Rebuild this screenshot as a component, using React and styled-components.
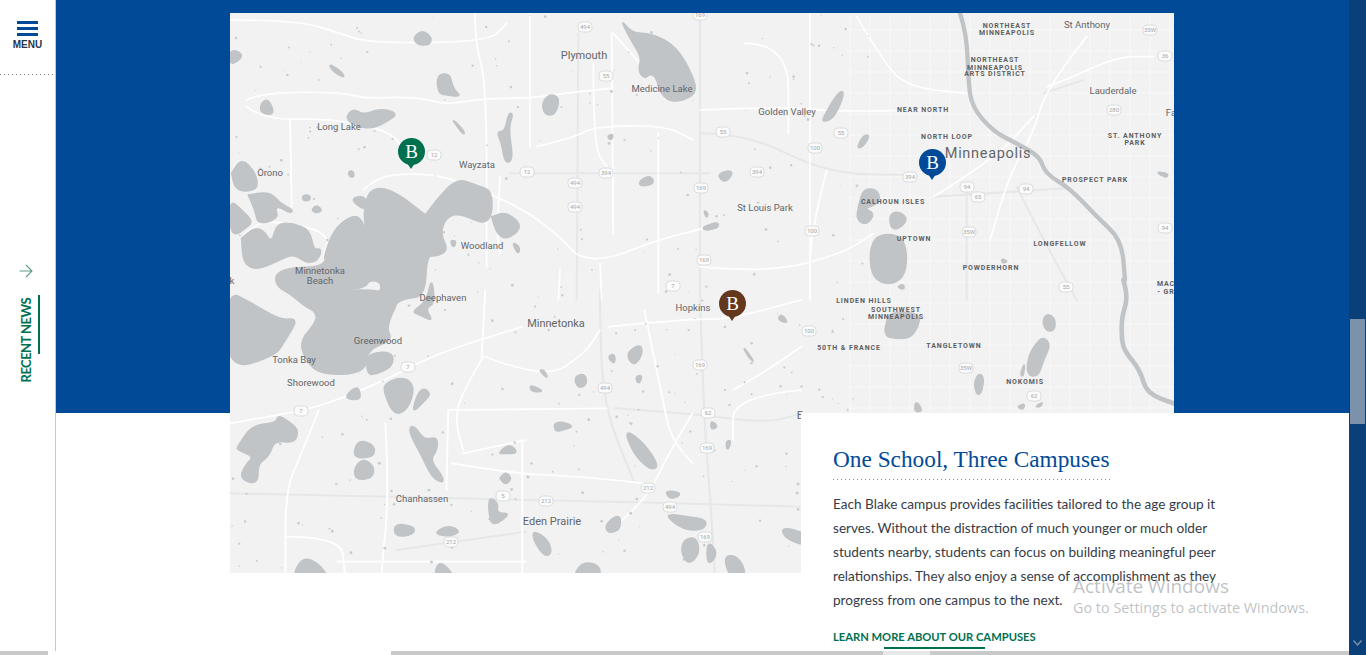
import React from "react";
import styled, { createGlobalStyle } from "styled-components";

const BLUE = "#014a97";
const GREEN = "#00704f";
const LAKE = "#c0c4c7";

const GlobalStyle = createGlobalStyle`
  html, body {
    margin: 0;
    height: 100%;
    overflow: hidden;
    background: #fff;
  }
`;

// lake outlines, traced per crop so each group has its own scale
const lakesNorthWest = [
  "M412,580 Q450,560 510,585 L585,645 L590,640 L620,600 L680,535 L740,555 L790,575 L780,680 L690,640 L650,650 L630,700 L655,750 L620,770 L590,765 L585,890 L520,895 L480,925 L470,990 L260,990 L260,935 L225,920 L180,880 L140,860 L135,820 L190,802 L265,802 L290,780 L280,775 L310,690 L360,650 L390,650 L415,705 L400,650Z",
  "M35,715 Q70,685 100,690 L125,730 Q140,670 190,670 Q240,690 250,750 L275,745 L265,780 Q230,790 190,760 L140,785 L80,810 Q40,790 35,715Z",
  "M55,585 L120,575 L150,610 L190,630 L180,640 L150,620 L135,625 L145,655 L85,675 Q75,630 55,585Z",
  "M0,600 L30,625 L70,665 L45,685 L20,705 L0,690Z",
  "M365,595 L400,588 L410,605 L405,628 L380,615Z",
  "M243,630 Q260,615 277,630 L262,640Z",
  "M218,585 L240,585 L240,602 L218,602Z",
  "M785,650 L830,635 L880,680 L830,720 Q800,700 785,650Z",
  "M545,935 L590,905 L605,830 L615,910 L585,925 L610,965 L570,945Z",
  "M1170,55 L1205,100 L1265,100 Q1340,140 1390,230 Q1400,280 1350,305 Q1310,300 1285,265 L1265,225 L1240,235 L1225,210 L1235,170 L1205,125Z",
  "M548,115 Q575,90 605,110 L600,135 L565,135Z",
  "M620,225 L660,220 L668,265 L695,290 L650,285 L625,280Z",
  "M935,310 Q960,280 990,295 L975,345 L945,345Z",
  "M345,355 Q370,325 400,345 L450,325 L505,340 L470,365 L430,385 L380,380Z",
  "M92,310 L115,295 L135,345 L92,340Z",
  "M5,520 Q35,475 75,515 Q85,565 45,575 Q15,565 5,520Z",
  "M800,395 L825,395 L835,340 L850,340 L835,385 L850,480 L825,490 L815,430Z",
  "M660,350 L705,395 L700,405Z",
  "M295,190 L335,215 L345,235 L310,215Z",
  "M0,145 L45,165 L0,200Z",
  "M1225,545 L1260,525 L1275,550 L1235,560Z",
  "M1130,410 L1150,400 L1145,422Z",
  "M355,515 L370,512 L372,532 L358,530Z",
  "M845,725 L870,740 L865,765Z",
  "M660,720 L680,725 L670,745Z",
  "M1420,630 L1435,640 L1430,655Z",
  "M1420,680 L1440,680 L1440,690 L1425,690Z",
];

const lakesNorthEast = [
  "M365,360 L415,275 L435,275 L405,350 L375,365Z",
  "M470,445 L490,405 L510,405 L490,440Z",
  "M50,525 L85,510 L100,520 L75,550Z",
  "M490,565 L535,570 L540,610 L490,625 L525,640 L500,675 L470,660 L475,620Z",
  "M570,640 L600,635 L625,660 L590,690 L570,680Z",
  "M565,700 L610,715 L622,775 L610,835 L565,855 L520,835 L508,775 L520,715Z",
  "M10,680 L55,665 L55,685 L10,690Z",
  "M1365,515 L1405,520 L1400,535Z",
  "M905,775 L925,785 L905,790Z",
  "M590,860 L612,852 L612,870Z",
];

const lakesSouthWest = [
  "M-10,0 L60,40 L135,90 L185,85 L150,150 L120,200 L-10,240Z",
  "M190,150 L240,90 L240,0 L470,0 L420,110 L440,150 L370,180 L365,250 L240,255 L200,200Z",
  "M370,190 L440,185 L440,230 L390,255 L370,250Z",
  "M415,280 L470,260 L500,290 L480,360 L445,375 L420,320Z",
  "M490,370 L515,290 L545,310 L520,340Z",
  "M310,320 L345,285 L355,325 L330,330Z",
  "M20,470 L60,405 L125,400 L130,375 L160,395 L185,420 L175,460 L120,450 L105,500 L75,520 L75,585 L25,565 L45,520 L65,500 L20,480Z",
  "M335,480 Q350,450 390,465 L390,500 L340,505Z",
  "M335,535 Q360,505 390,530 L385,565 L340,570Z",
  "M485,410 L500,410 L525,450 L560,440 L560,480 L540,510 L575,560 L575,580 L545,560 L520,500 L490,440Z",
  "M730,565 Q745,545 762,565 Q745,585 730,565Z",
  "M700,620 L725,640 L720,670 L760,670 L710,710 L700,670Z",
  "M445,700 L500,710 L495,735 L445,740Z",
  "M550,730 L590,705 L625,725 L590,740Z",
  "M165,870 L195,800 L240,820 L270,870Z",
  "M550,870 L565,805 L615,870Z",
  "M925,870 L950,815 L1000,825 L1000,870Z",
  "M820,720 L860,750 L870,790 L850,800 L820,750Z",
  "M1015,700 L1055,670 L1055,720 L1020,730Z",
  "M1065,415 L1120,460 L1160,530 L1135,540 L1090,490Z",
  "M1070,190 L1110,160 L1115,195 L1090,230Z",
  "M930,260 L960,250 L965,285 L940,295Z",
  "M810,285 L835,295 L845,305 L815,305Z",
  "M875,400 L900,395 L930,410 L900,420 L880,425Z",
  "M725,490 L755,460 L780,490 L740,490Z",
  "M1175,600 L1225,610 L1190,630Z",
  "M1170,670 L1240,680 L1290,690 L1280,720 L1225,720Z",
  "M1225,750 L1260,740 L1270,790 L1240,825 L1220,790Z",
  "M1290,750 L1320,790 L1290,830Z",
  "M1335,800 L1365,795 L1390,830 L1390,870 L1350,860Z",
  "M1490,710 L1560,730 L1560,770 L1500,745Z",
  "M1020,200 L1040,190 L1040,225Z",
  "M1095,260 L1115,255 L1105,285Z",
  "M1300,390 L1320,410 L1300,420Z",
  "M1385,165 L1420,220 L1400,200Z",
  "M1490,70 L1510,100 L1480,90Z",
  "M835,240 L850,240 L860,268Z",
  "M1340,455 L1355,450 L1345,485Z",
];

const lakesSouthEast = [
  "M285,150 Q295,100 345,95 Q390,105 385,140 Q360,175 315,175 Q290,170 285,150Z",
  "M757,125 Q770,100 795,115 Q795,150 770,155Z",
  "M738,190 Q760,170 782,195 Q760,240 745,290 L710,285 L715,230Z",
  "M690,285 L705,245 L700,290Z",
  "M552,310 Q565,280 582,290 L575,340 L560,345Z",
  "M372,395 L378,360 L400,395Z",
  "M680,380 L705,370 L700,390Z",
  "M735,380 L760,365 L750,382Z",
];

const islands = [
  "M280,890 L325,890 L345,935 L300,930Z",
  "M330,880 L410,865 L420,845 L450,850 L445,880 L390,890 L395,935 L370,925 L360,915 L330,925Z",
  "M1245,235 L1270,225 L1285,270 L1260,290Z",
];

const roadsNorthWest = [
  "M50,300 Q80,285 200,275 L350,280 L400,295 L560,290 L650,315 L760,295 L900,295 L1000,280 L1140,265",
  "M50,320 L100,360 L300,355 L470,390 L520,440 L545,510",
  "M400,570 Q440,530 545,520 L650,530 L800,590 L900,640 L1000,720 L1040,770 L1130,780 L1280,720 L1440,680",
  "M735,40 L735,130 L770,250 L770,800",
  "M900,40 L900,440",
  "M1285,400 L1285,880",
  "M1145,100 L1150,700",
  "M0,60 L200,60 L330,100 L420,130 L780,125 L830,70",
  "M810,530 L800,700 L810,760",
  "M1090,190 L1090,440 L1130,500",
  "M920,440 L1040,410 L1090,380 L1300,375 L1390,420",
  "M1110,790 L1115,900",
  "M990,810 L985,900",
  "M40,710 L70,670 L160,665 L300,700 L280,770",
  "M1150,100 L1230,190",
  "M180,355 L185,620",
];

const roadsNorthEast = [
  "M330,40 L330,900",
  "M0,330 L260,320 L400,335 L700,330",
  "M135,130 L265,130 L265,400",
  "M470,50 L530,150 L610,260 L800,280",
  "M380,510 L330,700 L330,900",
  "M0,800 L200,820 L430,760 L520,700",
  "M1040,260 L1100,240 L1250,170 L1360,170",
  "M1160,110 L1040,260 L1000,400 L930,520 L870,720",
  "M700,590 L880,480 L1000,350",
];

const roadsSouthWest = [
  "M590,360 L1020,355",
  "M590,360 L585,600",
  "M685,200 L620,320 L610,400 L630,480",
  "M240,360 L190,500 L150,600 L150,848",
  "M420,400 L430,600 L410,848",
  "M690,0 L680,200",
  "M1025,110 L1250,85 L1340,90 L1544,30",
  "M1250,370 L1190,480 L1130,620 L1030,720",
  "M790,450 L790,848",
  "M690,200 L850,270 L960,190 L1000,120",
  "M150,740 L300,740 L310,848",
  "M290,815 L800,815",
  "M1360,300 L1440,250 L1544,170",
  "M630,490 L800,450",
  "M600,520 L760,550 L950,560 L1120,580",
  "M1120,60 L1170,330 L1190,440 L1250,520",
  "M0,400 L190,365 L290,330 L420,270 L560,190 L790,110",
  "M1544,300 L1360,320 L1360,450",
];

const highwaysNorthWest = [
  "M840,520 L1440,520",
  "M1045,100 L1040,900",
  "M1410,40 L1410,900",
];

const highwaysNorthEast = [
  "M0,400 L140,400 L380,520 L620,525",
  "M700,590 L1100,565",
  "M950,560 L1020,700 L1130,900",
  "M800,580 L800,900",
  "M1030,280 L1150,240",
];

const highwaysSouthWest = [
  "M0,610 L700,625 L1544,650",
  "M1000,0 L1000,100 L1010,350 L1090,570",
  "M1270,0 L1280,370 L1300,650 L1310,848",
  "M1040,355 L1240,370 L1450,400 L1544,370",
  "M450,780 L800,725",
];

const shields = [
  ["12", 434, 155], ["12", 527, 172], ["494", 575, 183], ["394", 606, 173],
  ["494", 575, 207], ["55", 606, 76], ["169", 700, 15], ["494", 585, 27],
  ["169", 701, 188], ["7", 673, 286], ["169", 704, 260], ["55", 723, 132],
  ["55", 841, 133], ["100", 815, 148], ["394", 757, 172], ["394", 910, 177],
  ["94", 967, 187], ["65", 978, 197], ["94", 1026, 189], ["100", 812, 231],
  ["35W", 969, 232], ["35W", 1150, 30], ["36", 1165, 56], ["280", 1114, 110],
  ["55", 1066, 287], ["94", 1165, 228], ["7", 408, 367], ["7", 301, 411],
  ["494", 605, 388], ["169", 700, 365], ["62", 708, 413], ["169", 707, 448],
  ["212", 648, 488], ["5", 503, 496], ["212", 546, 501], ["212", 451, 542],
  ["494", 670, 507], ["169", 705, 537], ["100", 809, 331], ["35W", 966, 368],
  ["62", 1034, 396],
];

const cities = [
  ["Plymouth", 584, 59, 11], ["Medicine Lake", 662, 92, 9.5], ["Long Lake", 339, 130, 9.5],
  ["Wayzata", 477, 168, 9.5], ["Orono", 270, 176, 9.5], ["Woodland", 482, 249, 9.5],
  ["Minnetonka", 320, 274, 9.5], ["Beach", 320, 284, 9.5], ["Deephaven", 443, 301, 9.5],
  ["Greenwood", 378, 344, 9.5], ["Tonka Bay", 294, 363, 9.5], ["Shorewood", 311, 386, 9.5],
  ["Minnetonka", 556, 327, 11], ["Hopkins", 693, 311, 9.5], ["Chanhassen", 422, 502, 9.5],
  ["Eden Prairie", 552, 525, 11], ["Golden Valley", 787, 115, 9.5], ["St Louis Park", 765, 211, 9.5],
  ["St Anthony", 1087, 28, 9.5], ["Lauderdale", 1113, 94, 9.5], ["Fa", 1171, 116, 9.5],
  ["k", 232, 284, 9.5], ["E", 800, 419, 11],
];

const districts = [
  ["NORTHEAST", 1007, 28], ["MINNEAPOLIS", 1007, 35], ["NORTHEAST", 995, 62], ["MINNEAPOLIS", 995, 70],
  ["ARTS DISTRICT", 995, 76], ["NEAR NORTH", 923, 112], ["NORTH LOOP", 947, 139],
  ["ST. ANTHONY", 1135, 138], ["PARK", 1135, 145], ["PROSPECT PARK", 1095, 182],
  ["CALHOUN ISLES", 893, 204], ["UPTOWN", 914, 241], ["LONGFELLOW", 1060, 246],
  ["POWDERHORN", 991, 270], ["LINDEN HILLS", 864, 303], ["SOUTHWEST", 896, 312],
  ["MINNEAPOLIS", 896, 319], ["50TH & FRANCE", 849, 350], ["TANGLETOWN", 954, 348],
  ["NOKOMIS", 1025, 384], ["MAC", 1166, 286], ["- GR", 1166, 294],
];

const pins = [
  { id: "north", left: 168, top: 125, color: "#00704f" },
  { id: "middle", left: 489, top: 277, color: "#63381c" },
  { id: "south", left: 689, top: 136, color: "#014a97" },
];

const streetColumns = Array.from({ length: 17 }, (_, i) => 850 + i * 20);
const streetRows = Array.from({ length: 19 }, (_, i) => 30 + i * 21);

// tiny ponds scattered over the suburbs
const specks = (() => {
  let seed = 7;
  const next = () => {
    seed = (seed * 16807) % 2147483647;
    return seed / 2147483647;
  };
  return Array.from({ length: 300 }, () => ({
    x: 232 + next() * 640,
    y: 15 + next() * 555,
    r: 0.5 + next() * 1,
  }));
})();

const toPoints = (d) => {
  const nums = d.match(/-?\d+(\.\d+)?/g).map(Number);
  const points = [];
  for (let i = 0; i < nums.length; i += 2) points.push([nums[i], nums[i + 1]]);
  return points;
};

const mid = (a, b) => `${(a[0] + b[0]) / 2},${(a[1] + b[1]) / 2}`;

const smoothClosed = (d) => {
  const pts = toPoints(d);
  let out = `M${mid(pts[pts.length - 1], pts[0])}`;
  pts.forEach((p, i) => {
    out += ` Q${p[0]},${p[1]} ${mid(p, pts[(i + 1) % pts.length])}`;
  });
  return `${out}Z`;
};

const smoothOpen = (d) => {
  const pts = toPoints(d);
  let out = `M${pts[0][0]},${pts[0][1]}`;
  for (let i = 1; i < pts.length - 1; i++) {
    out += ` Q${pts[i][0]},${pts[i][1]} ${mid(pts[i], pts[i + 1])}`;
  }
  const last = pts[pts.length - 1];
  return `${out} L${last[0]},${last[1]}`;
};

const Frame = styled.div`
  display: grid;
  grid-template-columns: 56px 1fr 17px;
  grid-template-rows: 1fr 4px;
  height: 100vh;
  overflow: hidden;
`;

const Sidebar = styled.aside`
  display: flex;
  flex-direction: column;
  border-right: 1px solid #c6c8cc;
  background: #fff;
`;

const MenuButton = styled.div`
  display: flex;
  flex-direction: column;
  align-items: center;
  height: 75px;
  padding-top: 21px;
  box-sizing: border-box;
  background: repeating-linear-gradient(to right, #8a8a8a 0 1px, transparent 1px 4px) left bottom / 100% 1px no-repeat;
`;

const MenuBar = styled.span`
  display: block;
  width: 21px;
  height: 3px;
  margin-bottom: 3px;
  background: ${BLUE};
`;

const MenuLabel = styled.span`
  font: 700 10px "Liberation Sans", Arial, sans-serif;
  color: #26374d;
`;

const NewsTab = styled.div`
  display: flex;
  align-items: flex-start;
  margin: 189px 0 0 19px;
  gap: 5px;
`;

const NewsColumn = styled.div`
  display: flex;
  flex-direction: column;
  align-items: center;
  gap: 20px;
  width: 14px;
`;

const NewsLabel = styled.span`
  writing-mode: vertical-rl;
  transform: rotate(180deg);
  font: 700 13px Lato, "Open Sans", sans-serif;
  letter-spacing: -0.55px;
  line-height: 14px;
  color: ${GREEN};
`;

const NewsRule = styled.span`
  display: block;
  width: 2px;
  height: 59px;
  margin-top: 31px;
  background: ${GREEN};
`;

const Main = styled.main`
  position: relative;
  overflow: hidden;
  min-width: 0;
`;

const Band = styled.section`
  height: 413px;
  padding: 13px 0 0 174px;
  box-sizing: border-box;
  background: ${BLUE};
`;

const MapBox = styled.div`
  position: relative;
  width: 944px;
  height: 560px;
  background: #f2f2f2;
  overflow: hidden;
`;

const MapArt = styled.svg`
  display: block;
  width: 944px;
  height: 560px;
`;

const CityLabel = styled.text`
  font-family: Roboto, "Liberation Sans", sans-serif;
  font-size: ${(p) => p.$size}px;
  fill: #636669;
  text-anchor: middle;
`;

const CapitalLabel = styled(CityLabel)`
  letter-spacing: 0.7px;
`;

const DistrictLabel = styled.text`
  font-family: Roboto, "Liberation Sans", sans-serif;
  font-size: 7px;
  font-weight: 700;
  letter-spacing: 0.9px;
  fill: #5c5f62;
  text-anchor: middle;
`;

const ShieldLabel = styled.text`
  font-family: Roboto, "Liberation Sans", sans-serif;
  font-size: 6px;
  fill: #a5a7a9;
  text-anchor: middle;
`;

const Pin = styled.div`
  position: absolute;
  left: ${(p) => p.$left}px;
  top: ${(p) => p.$top}px;
  display: flex;
  align-items: center;
  justify-content: center;
  width: 27px;
  height: 27px;
  border-radius: 50%;
  background: ${(p) => p.$color};
  color: #fff;
  font: 19px "Liberation Serif", "Times New Roman", serif;

  &::after {
    content: "";
    position: absolute;
    left: 9px;
    top: 25px;
    border-style: solid;
    border-width: 6px 4.5px 0;
    border-color: ${(p) => p.$color} transparent transparent;
  }
`;

const Card = styled.article`
  position: relative;
  margin-left: 745px;
  width: 548px;
  height: 238px;
  padding: 32px 32px 0;
  box-sizing: border-box;
  background: #fff;
`;

const Title = styled.h2`
  display: inline-block;
  margin: 0 0 12px;
  padding-bottom: 6px;
  background: repeating-linear-gradient(to right, #8a8f96 0 1px, transparent 1px 4px) left bottom / 100% 1px no-repeat;
  font: 400 23.3px/29px "Liberation Serif", "Times New Roman", serif;
  color: ${BLUE};
`;

const Body = styled.p`
  margin: 0;
  width: 400px;
  font: 400 13.6px/24px Lato, "Open Sans", sans-serif;
  color: #363c47;
`;

const MoreLink = styled.a`
  display: block;
  margin-top: 18px;
  font: 700 11.2px/14px Lato, "Open Sans", sans-serif;
  color: ${GREEN};
`;

const MoreRule = styled.span`
  display: block;
  width: 101px;
  height: 2px;
  margin: 3px 0 0 51px;
  background: ${GREEN};
`;

const Watermark = styled.div`
  position: absolute;
  left: 1017px;
  top: 575px;
  font-family: "Open Sans", "Liberation Sans", sans-serif;
  color: rgba(150, 155, 160, 0.62);
`;

const WatermarkTitle = styled.div`
  font-size: 19px;
  line-height: 22px;
`;

const WatermarkNote = styled.div`
  font-size: 14.4px;
  line-height: 22px;
`;

const Scrollbar = styled.div`
  grid-column: 3;
  grid-row: 1 / span 2;
  display: flex;
  flex-direction: column;
  align-items: center;
  background: #0a3f78;
`;

const ScrollThumb = styled.div`
  width: 15px;
  height: 105px;
  margin-top: 319px;
  background: #7c92aa;
`;

const ScrollArrow = styled.svg`
  width: 9px;
  height: 6px;
  margin-top: auto;
  margin-bottom: 9px;
`;

const BottomBar = styled.div`
  grid-column: 1 / span 2;
  display: flex;
  background: #c9c9c9;
`;

const BarPiece = styled.span`
  display: block;
  width: ${(p) => p.$width}px;
  background: ${(p) => p.$color};
`;

const StrokeGroup = ({ paths, color, width, origin, scaleX = 3, scaleY = 3 }) => (
  <g
    transform={`translate(${origin[0]} ${origin[1]}) scale(${1 / scaleX} ${1 / scaleY})`}
    fill="none"
    stroke={color}
    strokeWidth={width}
    strokeLinejoin="round"
    strokeLinecap="round"
  >
    {paths.map((d) => (
      <path key={d} d={smoothOpen(d)} />
    ))}
  </g>
);

const LakeGroup = ({ paths, color = LAKE, origin, scaleX = 3, scaleY = 3 }) => (
  <g
    transform={`translate(${origin[0]} ${origin[1]}) scale(${1 / scaleX} ${1 / scaleY})`}
    fill={color}
    stroke={color}
    strokeWidth="5"
    strokeLinejoin="round"
  >
    {paths.map((d) => (
      <path key={d} d={smoothClosed(d)} />
    ))}
  </g>
);

const MapDrawing = () => (
  <MapArt viewBox="230 13 944 560">
    <g stroke="#fafafa" strokeWidth="1" opacity="0.9">
      {streetColumns.map((x) => (
        <line key={x} x1={x} y1="13" x2={x} y2="413" />
      ))}
      {streetRows.map((y) => (
        <line key={y} x1="850" y1={y} x2="1174" y2={y} />
      ))}
    </g>
    <StrokeGroup paths={highwaysNorthWest} color="#e6e7e8" width={6} origin={[230, 0]} />
    <StrokeGroup paths={highwaysNorthEast} color="#e6e7e8" width={6} origin={[700, 0]} />
    <StrokeGroup paths={highwaysSouthWest} color="#e6e7e8" width={6} origin={[230, 290]} scaleX={2.703} />
    <StrokeGroup paths={roadsNorthWest} color="#fff" width={5} origin={[230, 0]} />
    <StrokeGroup paths={roadsNorthEast} color="#fff" width={5} origin={[700, 0]} />
    <StrokeGroup paths={roadsSouthWest} color="#fff" width={5} origin={[230, 290]} scaleX={2.703} />
    <g fill="#c9ccce">
      {specks.map((s) => (
        <circle key={`${s.x}-${s.y}`} cx={s.x} cy={s.y} r={s.r} />
      ))}
    </g>
    <LakeGroup paths={lakesNorthWest} origin={[230, 0]} />
    <LakeGroup paths={islands} color="#f2f2f2" origin={[230, 0]} />
    <LakeGroup paths={lakesNorthEast} origin={[700, 0]} />
    <LakeGroup paths={lakesSouthWest} origin={[230, 290]} scaleX={2.703} />
    <LakeGroup paths={lakesSouthEast} origin={[790, 280]} />
    <StrokeGroup
      paths={["M780,40 L800,100 L805,240 L815,320 L880,395 L950,430 L1020,470 L1035,520 L1110,565 L1190,650 L1265,720 L1275,840"]}
      color={LAKE}
      width={13}
      origin={[700, 0]}
    />
    <StrokeGroup
      paths={["M1000,0 L1015,50 L995,110 L995,180 L1005,215 L1050,270 L1070,340 L1150,370"]}
      color={LAKE}
      width={14}
      origin={[790, 280]}
    />
    {shields.map(([label, x, y]) => (
      <g key={`${label}-${x}`}>
        <rect x={x - 7} y={y - 5} width="14" height="10" rx="4" fill="#fbfbfb" stroke="#d4d5d6" strokeWidth="0.8" />
        <ShieldLabel x={x} y={y + 2}>{label}</ShieldLabel>
      </g>
    ))}
    {cities.map(([label, x, y, size]) => (
      <CityLabel key={`${label}-${x}`} x={x} y={y} $size={size}>{label}</CityLabel>
    ))}
    {districts.map(([label, x, y]) => (
      <DistrictLabel key={`${label}-${y}`} x={x} y={y}>{label}</DistrictLabel>
    ))}
    <CapitalLabel x="988" y="158" $size={14.5}>Minneapolis</CapitalLabel>
  </MapArt>
);

export default function App() {
  return (
    <>
      <GlobalStyle />
      <Frame>
        <Sidebar>
          <MenuButton>
            <MenuBar />
            <MenuBar />
            <MenuBar />
            <MenuLabel>MENU</MenuLabel>
          </MenuButton>
          <NewsTab>
            <NewsColumn>
              <svg width="14" height="14" viewBox="0 0 14 14" fill="none" stroke="#5f9c88" strokeWidth="1.1">
                <path d="M0.5 7H13M7 1l6 6-6 6" />
              </svg>
              <NewsLabel>RECENT NEWS</NewsLabel>
            </NewsColumn>
            <NewsRule />
          </NewsTab>
        </Sidebar>
        <Main>
          <Band>
            <MapBox>
              <MapDrawing />
              {pins.map((pin) => (
                <Pin key={pin.id} $left={pin.left} $top={pin.top} $color={pin.color}>B</Pin>
              ))}
            </MapBox>
          </Band>
          <Card>
            <Title>One School, Three Campuses</Title>
            <Body>
              Each Blake campus provides facilities tailored to the age group it serves. Without the
              distraction of much younger or much older students nearby, students can focus on
              building meaningful peer relationships. They also enjoy a sense of accomplishment as
              they progress from one campus to the next.
            </Body>
            <MoreLink>LEARN MORE ABOUT OUR CAMPUSES</MoreLink>
            <MoreRule />
          </Card>
          <Watermark>
            <WatermarkTitle>Activate Windows</WatermarkTitle>
            <WatermarkNote>Go to Settings to activate Windows.</WatermarkNote>
          </Watermark>
        </Main>
        <Scrollbar>
          <ScrollThumb />
          <ScrollArrow viewBox="0 0 9 6" fill="none" stroke="#7c92aa" strokeWidth="1.4">
            <path d="M0.5 0.5L4.5 5L8.5 0.5" />
          </ScrollArrow>
        </Scrollbar>
        <BottomBar>
          <BarPiece $width={48} $color="#c9c9c9" />
          <BarPiece $width={343} $color="#fff" />
          <BarPiece $width={492} $color="#c9c9c9" />
          <BarPiece $width={47} $color="#e8e8e8" />
        </BottomBar>
      </Frame>
    </>
  );
}
